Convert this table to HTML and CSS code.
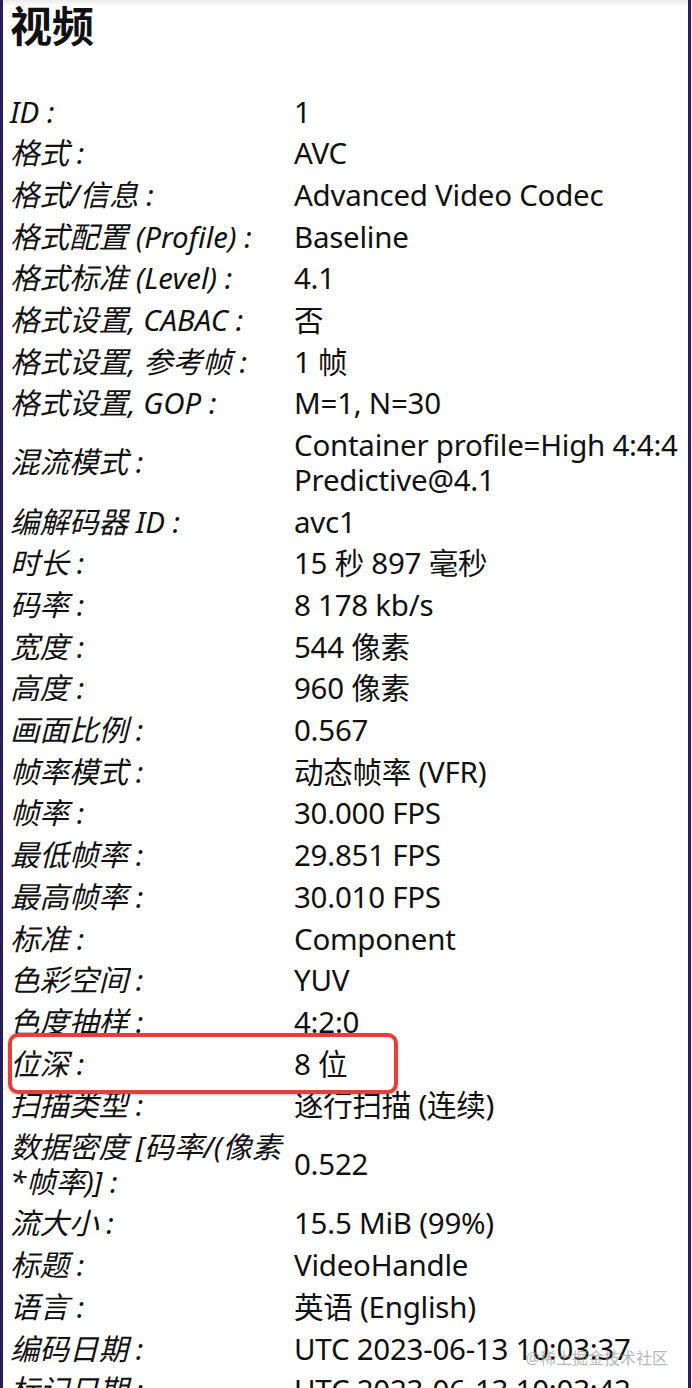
FILE: index.html
```html
<!DOCTYPE html>
<html lang="zh-CN">
<head>
<meta charset="utf-8">
<title>视频</title>
<link rel="stylesheet" href="styles.css">
</head>
<body>
<div class="page">
  <h1 class="title">视频</h1>
  <table class="info">
    <tbody>
      <tr><td class="k">ID :</td><td class="v">1</td></tr>
      <tr><td class="k">格式 :</td><td class="v">AVC</td></tr>
      <tr><td class="k">格式/信息 :</td><td class="v">Advanced Video Codec</td></tr>
      <tr><td class="k">格式配置 (Profile) :</td><td class="v">Baseline</td></tr>
      <tr><td class="k">格式标准 (Level) :</td><td class="v">4.1</td></tr>
      <tr><td class="k">格式设置, CABAC :</td><td class="v">否</td></tr>
      <tr><td class="k">格式设置, 参考帧 :</td><td class="v">1 帧</td></tr>
      <tr><td class="k">格式设置, GOP :</td><td class="v">M=1, N=30</td></tr>
      <tr><td class="k">混流模式 :</td><td class="v">Container profile=High 4:4:4 Predictive@4.1</td></tr>
      <tr><td class="k">编解码器 ID :</td><td class="v">avc1</td></tr>
      <tr><td class="k">时长 :</td><td class="v">15 秒 897 毫秒</td></tr>
      <tr><td class="k">码率 :</td><td class="v">8 178 kb/s</td></tr>
      <tr><td class="k">宽度 :</td><td class="v">544 像素</td></tr>
      <tr><td class="k">高度 :</td><td class="v">960 像素</td></tr>
      <tr><td class="k">画面比例 :</td><td class="v">0.567</td></tr>
      <tr><td class="k">帧率模式 :</td><td class="v">动态帧率 (VFR)</td></tr>
      <tr><td class="k">帧率 :</td><td class="v">30.000 FPS</td></tr>
      <tr><td class="k">最低帧率 :</td><td class="v">29.851 FPS</td></tr>
      <tr><td class="k">最高帧率 :</td><td class="v">30.010 FPS</td></tr>
      <tr><td class="k">标准 :</td><td class="v">Component</td></tr>
      <tr><td class="k">色彩空间 :</td><td class="v">YUV</td></tr>
      <tr><td class="k">色度抽样 :</td><td class="v">4:2:0</td></tr>
      <tr class="marked"><td class="k">位深 :</td><td class="v">8 位<span class="mark"></span></td></tr>
      <tr><td class="k">扫描类型 :</td><td class="v">逐行扫描 (连续)</td></tr>
      <tr><td class="k">数据密度 [码率/(像素*帧率)] :</td><td class="v">0.522</td></tr>
      <tr><td class="k">流大小 :</td><td class="v">15.5 MiB (99%)</td></tr>
      <tr><td class="k">标题 :</td><td class="v">VideoHandle</td></tr>
      <tr><td class="k">语言 :</td><td class="v">英语 (English)</td></tr>
      <tr><td class="k">编码日期 :</td><td class="v">UTC 2023-06-13 10:03:37</td></tr>
      <tr><td class="k">标记日期 :</td><td class="v">UTC 2023-06-13 10:03:42</td></tr>
    </tbody>
  </table>
  <div class="watermark">@稀土掘金技术社区</div>
</div>
</body>
</html>
```
FILE: styles.css
```css
html, body {
  margin: 0;
  padding: 0;
  background: #ffffff;
}
body {
  font-family: "Noto Sans", "Noto Sans CJK SC", sans-serif;
  color: #111111;
  overflow: hidden;
}
.page {
  position: relative;
  box-sizing: border-box;
  width: 691px;
  min-height: 1388px;
  border-left: 3px solid #261d63;
  border-right: 3px solid #261d63;
  padding: 0 0 0 7px;
  background: linear-gradient(#eaeaea, #ffffff 6px);
}
.title {
  margin: 0;
  font-size: 42px;
  line-height: 48px;
  font-weight: 700;
  height: 91px;
  font-family: "Noto Sans CJK SC", sans-serif;
}
.info {
  border-collapse: collapse;
  font-size: 29.5px;
}
.info td {
  padding: 3.5px 0;
  line-height: 34.7px;
  vertical-align: middle;
}
.info .k {
  font-style: italic;
  width: 284px;
}
.info .v {
  width: 394px;
  letter-spacing: -0.25px;
}
.marked .v {
  position: relative;
}
.mark {
  position: absolute;
  box-sizing: border-box;
  left: -286px;
  top: -10px;
  width: 390px;
  height: 61px;
  border: 4px solid #e4403b;
  border-radius: 10px;
  box-shadow: 0 1px 3px rgba(0,0,0,0.25);
}
.watermark {
  position: absolute;
  right: 20px;
  top: 1345px;
  font-size: 16px;
  color: rgba(150,150,150,0.7);
}
```
